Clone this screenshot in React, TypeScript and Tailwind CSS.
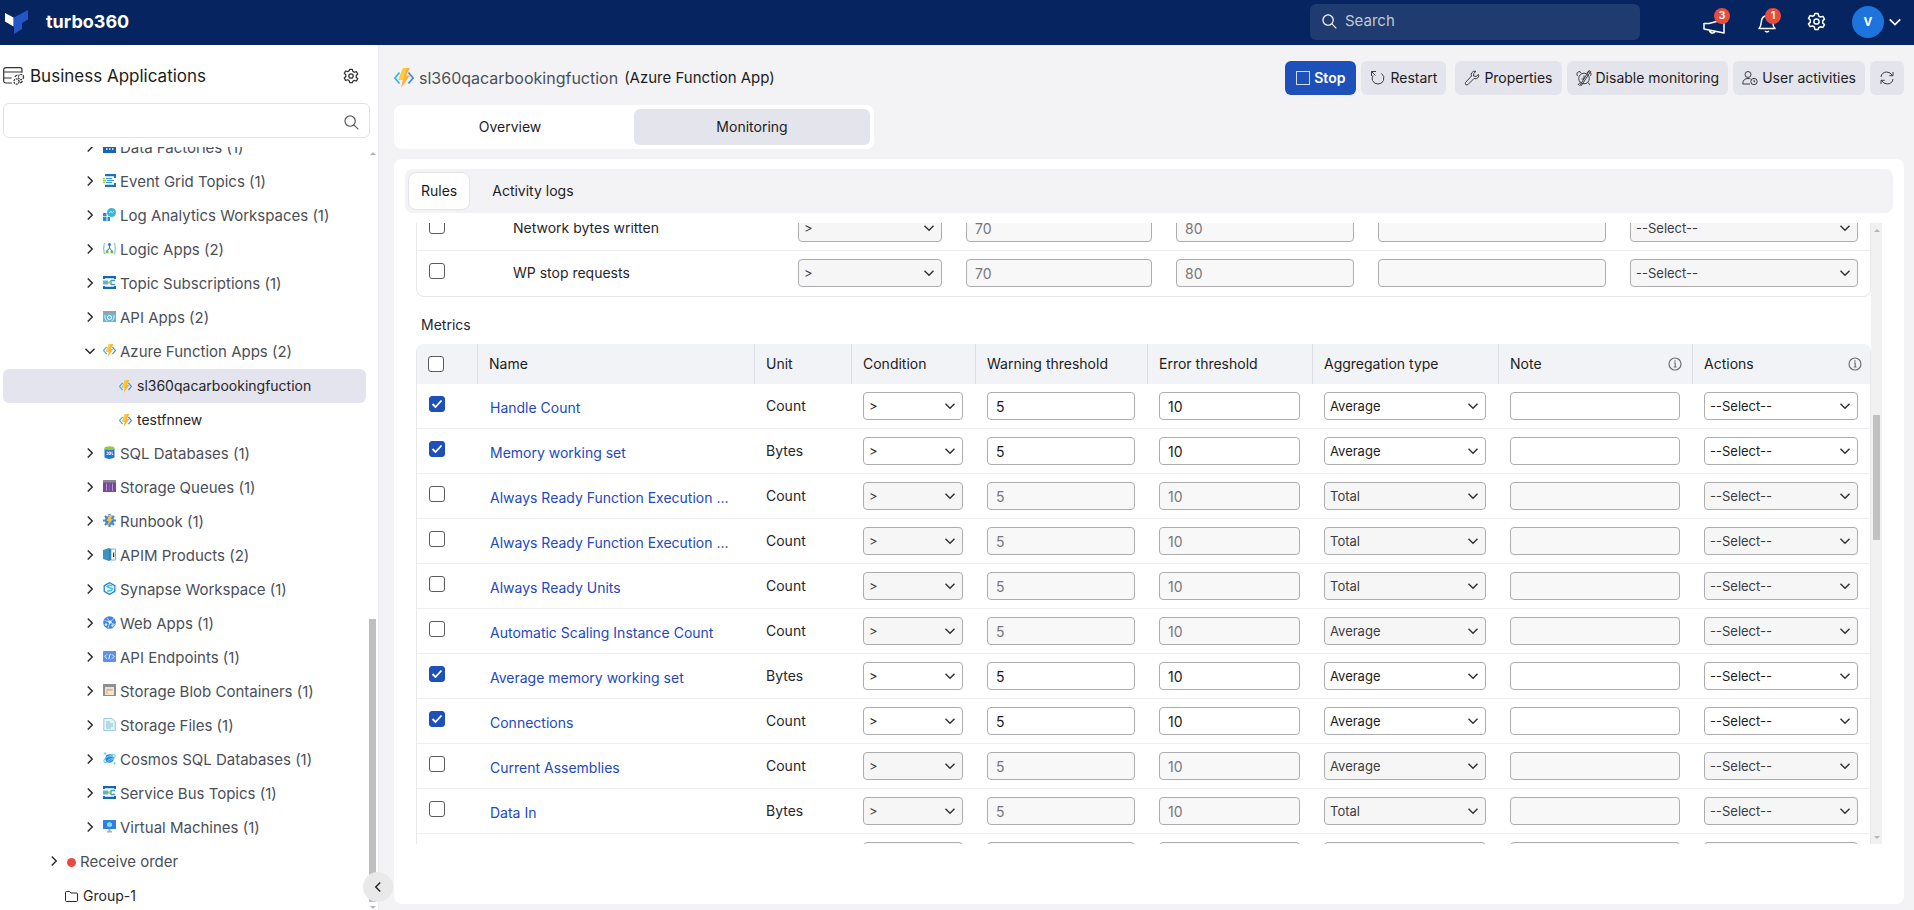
import type { ReactNode } from "react";

/* ---------- small line icons ---------- */

function Chevron({ dir, className }: { dir: "right" | "down" | "left"; className: string }) {
  const d = dir === "right" ? "M5 2l6 6-6 6" : dir === "left" ? "M11 2L5 8l6 6" : "M2 5l6 6 6-6";
  return (
    <svg viewBox="0 0 16 16" className={className} fill="none" stroke="currentColor" strokeWidth="1.9">
      <path d={d} />
    </svg>
  );
}

function Gear({ className }: { className: string }) {
  return (
    <svg viewBox="0 0 24 24" className={className} fill="none" stroke="currentColor" strokeWidth="1.9" strokeLinejoin="round">
      <path d="M10 2h4l.8 3.1 2.2 1.3 3.1-.9 2 3.5-2.3 2.2v2.600l2.300 2.200-2 3.500-3.100-.9-2.200 1.300L14 22h-4l-.8-3.100L7 17.600l-3.100.9-2-3.500 2.300-2.200v-2.600L1.900 8l2-3.500 3.100.9 2.200-1.300z" />
      <circle cx="12" cy="12" r="3.300" />
    </svg>
  );
}

function Magnifier({ className }: { className: string }) {
  return (
    <svg viewBox="0 0 16 16" className={className} fill="none" stroke="currentColor" strokeWidth="1.3">
      <circle cx="6.500" cy="6.500" r="5.500" />
      <path d="M10.500 10.500L15.300 15.300" />
    </svg>
  );
}

function Info() {
  return (
    <svg viewBox="0 0 14 14" className="size-3.5 shrink-0 text-[#6f7076]" fill="none" stroke="currentColor" strokeWidth="1.2">
      <circle cx="7" cy="7" r="6" />
      <path d="M6 6h1.200v4M5.700 10h2.900M7 3.300v1.400" />
    </svg>
  );
}

function Bolt({ className }: { className: string }) {
  return (
    <svg viewBox="0 0 20 20" className={className} fill="none">
      <path d="M5.500 4.500L1 10l4.500 5.500" stroke="#35b6ea" strokeWidth="1.800" />
      <path d="M14.500 4.500L19 10l-4.500 5.500" stroke="#3f8fe0" strokeWidth="1.800" />
      <path d="M9 0h7l-4 7.500h4L7 20l1.800-8H4.500z" fill="#fbb03b" />
      <path d="M4.500 12L9 0h3.500L9 12z" fill="#ffca3a" />
    </svg>
  );
}

/* ---------- resource glyphs for the tree ---------- */

const glyphs: Record<string, ReactNode> = {
  factory: (
    <>
      <path d="M0 5l4-3v3l4-3v3h5v8H0z" fill="#1b63b5" />
      <path d="M3 9h1.500M6 9h1.500M9 9h1.500" stroke="#fff" strokeWidth="1.500" />
    </>
  ),
  grid: (
    <>
      <path d="M2 1.200h11M2 11.800h11" stroke="#1f6fc4" strokeWidth="2.200" />
      <path d="M12 1v3M12 9v3" stroke="#1f6fc4" strokeWidth="2" />
      <path d="M3 4.500h6M4 6.500h7M3 8.500h6" stroke="#2b9bd8" strokeWidth="1" />
      <path d="M0 4.500h2M0 6.500h3M0 8.500h2" stroke="#a7cf3a" strokeWidth="1.300" />
    </>
  ),
  logs: (
    <>
      <path d="M0 5h3.500v8H0zM4.500 8H7v5H4.500z" fill="#2f86dd" />
      <circle cx="8.500" cy="4.500" r="4.500" fill="#37b6d9" />
      <path d="M6 5l2-1.500 1.500 1.200L11 2.800" stroke="#d8f5fb" fill="none" />
      <path d="M0 8.500h7" stroke="#fff" strokeWidth=".7" />
    </>
  ),
  logic: (
    <>
      <path d="M2.500 1Q1 1 1 3v2L.3 6.500 1 8v2q0 2 1.500 2M10.500 1Q12 1 12 3v2l.7 1.500L12 8v2q0 2-1.500 2" stroke="#7cc3e8" fill="none" strokeWidth="1.200" />
      <path d="M6.500 3v3L4 9M6.500 6L9 9" stroke="#2b7bbb" fill="none" />
      <circle cx="6.500" cy="2.500" r="1.500" fill="#2b7bbb" />
      <path d="M2.800 8.500h2.700v2.700H2.800zM7.500 8.500h2.700v2.700H7.500z" fill="#7ab83c" />
    </>
  ),
  topic: (
    <>
      <path d="M0 1.200h13M0 11.800h13" stroke="#1765b3" strokeWidth="2.200" />
      <path d="M1 0v3M12 0v3M1 10v3M12 10v3" stroke="#1765b3" strokeWidth="1.800" />
      <path d="M0 4.500h5v4H0z" fill="#58b4d9" />
      <path d="M5 6.500h3M8 4.500h4M8 8.500h4M8 4v5" stroke="#3d9bd6" strokeWidth="1.300" fill="none" />
      <circle cx="6.500" cy="6.500" r="1.300" fill="#b8d432" />
    </>
  ),
  api: (
    <>
      <path d="M0 1h13v11H0z" fill="#66b7d8" />
      <path d="M0 1h13v2H0z" fill="#9ba0a4" />
      <circle cx="6.500" cy="7.500" r="2" fill="none" stroke="#fff" />
      <path d="M2 5v3q0 2 2.500 3M11 5v3q0 2-2.500 3" stroke="#d9eff8" fill="none" />
    </>
  ),
  sql: (
    <>
      <path d="M1.500 2.500h10v9q-5 2.800-10 0z" fill="#2277cf" />
      <ellipse cx="6.500" cy="2.200" rx="5" ry="1.900" fill="#9cc83c" />
      <path d="M3.500 6H5v2.500H3.500M6 6h1.500v2.500H6zM9 5.500v3h1.200" stroke="#fff" fill="none" strokeWidth=".8" />
    </>
  ),
  queue: (
    <>
      <path d="M0 1h13v11H0z" fill="#76479b" />
      <path d="M0 0h13v2.500H0z" fill="#8a8a90" />
      <path d="M3.500 3.500v7.500M9.500 3.500v7.500" stroke="#b994d2" strokeWidth="1" />
      <path d="M6.500 3.500v7.500" stroke="#8d62ad" />
    </>
  ),
  runbook: (
    <>
      <path d="M6.500 0v13M0 6.500h13M2 2l9 9M11 2l-9 9" stroke="#3f86dd" strokeWidth="2.200" />
      <circle cx="6.500" cy="6.500" r="4.600" fill="#3f86dd" />
      <path d="M6 1h4L7.800 5H10L4.500 12l1.200-5H3.700z" fill="#fdbf3a" />
    </>
  ),
  apim: (
    <>
      <path d="M0 2l6-2v13l-6-2z" fill="#3c93c2" />
      <path d="M6 0l2 1v11l-2 1z" fill="#2b7ba8" />
      <path d="M8 1h4.500v11H8z" fill="#fff" stroke="#4aa3cf" strokeWidth=".8" />
      <path d="M10.800 4l-.8 2v3h1.200V4z" fill="#222" />
    </>
  ),
  synapse: (
    <>
      <path d="M6.500.7l5.300 3v5.700l-5.300 3-5.300-3V3.700z" fill="#fff" stroke="#2a7fd8" strokeWidth="1.300" />
      <path d="M9.500 4Q6 2.500 4 4.500q3 1.500 5.300 2.200Q9 9.500 4 9" stroke="#35c5ee" fill="none" strokeWidth="1.500" />
    </>
  ),
  web: (
    <>
      <circle cx="6.500" cy="6.500" r="6.300" fill="#3f83de" />
      <path d="M1.500 4.500L7 6l4-3.500M7 6l-2 6M7 6l5 3M4 1.500L7 6" stroke="#bcd8f8" fill="none" />
      <circle cx="7" cy="6" r="1.600" fill="#fff" />
      <circle cx="3" cy="8.500" r="1.200" fill="#dcebfc" />
      <circle cx="9.500" cy="9.500" r="1.200" fill="#dcebfc" />
    </>
  ),
  endpoint: (
    <>
      <rect x="0" y="1" width="13" height="11" rx="1" fill="#5a92ec" />
      <path d="M4 4.300L1.800 6.500 4 8.700M9 4.300l2.200 2.200L9 8.700M7.300 3.800L5.700 9.200" stroke="#fff" fill="none" strokeWidth=".9" />
    </>
  ),
  blob: (
    <>
      <path d="M0 0h13v12H0z" fill="#8f8f92" />
      <path d="M2 3h9v8H2z" fill="#e9e2dc" />
      <path d="M3.500 5h6v5h-6z" fill="#f3a067" />
      <path d="M4.500 6.500h6V11h-6z" fill="#fbe3d1" />
    </>
  ),
  files: (
    <>
      <path d="M.8.500h8.500L12.300 3.500V12.500H.8z" fill="#e3f2f8" stroke="#9ccbdd" />
      <path d="M3 4h4M3 6h7M3 8h7M3 10h5" stroke="#7fbad2" strokeWidth=".9" />
    </>
  ),
  cosmos: (
    <>
      <circle cx="6.500" cy="6.500" r="4.300" fill="#2f7fdc" />
      <path d="M4 5Q7 3 10 5M4.500 8.500Q7 6 10 7" stroke="#8fc9f7" fill="none" />
      <ellipse cx="6.500" cy="6.500" rx="6.300" ry="2.400" transform="rotate(-30 6.500 6.500)" fill="none" stroke="#4fd0ef" />
      <path d="M2 0v3M.5 1.500h3M11.500 10v2.500M10.300 11.200h2.500" stroke="#4fd0ef" strokeWidth=".8" />
    </>
  ),
  vm: (
    <>
      <rect x="0" y="0" width="13" height="9" rx=".6" fill="#2f7fe0" />
      <path d="M6.500 2L9 3.300v2.600L6.500 7.200 4 5.900V3.300z" fill="#7fe0f5" />
      <path d="M5.500 9h2v2.500h-2zM4 11.300h5v1.200H4z" fill="#a5a8ad" />
    </>
  ),
};

function Glyph({ name }: { name: string }) {
  if (name === "bolt") return <Bolt className="size-[13px] shrink-0" />;
  return (
    <svg viewBox="0 0 13 13" className="size-[13px] shrink-0">
      {glyphs[name]}
    </svg>
  );
}

/* ---------- header ---------- */

function Badge({ children }: { children: ReactNode }) {
  return (
    <span className="absolute -right-1.5 -top-0.5 flex size-4 items-center justify-center rounded-full bg-[#e74c3c] text-[11px] font-semibold">
      {children}
    </span>
  );
}

function Header() {
  return (
    <header className="flex h-[45px] shrink-0 items-center bg-[#052460] pb-0.5 pl-[5px] pr-3 text-white">
      <svg viewBox="0 0 23 24" className="h-6 w-[23px]">
        <path d="M0 3l8.500 4.500v9L0 11.500z" fill="#fff" />
        <path d="M9 7.500L23 0v9.500l-6 3.500v6L9 24z" fill="#2457c5" />
      </svg>
      <span className="ml-[18px] font-['Inter',sans-serif] text-lg font-bold leading-6">turbo360</span>
      <label className="ml-auto flex h-9 w-[330px] items-center gap-2 rounded-md bg-[#203b70] px-3">
        <Magnifier className="size-[15px] text-white" />
        <input
          aria-label="Search"
          placeholder="Search"
          className="min-w-0 flex-1 bg-transparent text-[15px] text-white outline-none placeholder:text-[#c3c8d3]"
        />
      </label>
      <button aria-label="Announcements" className="relative ml-[63px] h-6 w-[21px]">
        <svg viewBox="0 0 22 16" className="mt-2 h-4 w-[22px]" fill="none" stroke="currentColor" strokeWidth="1.500" strokeLinejoin="round">
          <path d="M1 5v6.500M1 5.500h5L21 1.500v13.500L1 11M6.500 12.500q.5 2.500 3.200 2.500 1.800 0 2.300-1.700" />
        </svg>
        <Badge>3</Badge>
      </button>
      <button aria-label="Notifications" className="relative ml-[34px] h-6 w-[17px]">
        <svg viewBox="0 0 18 19" className="mt-1 h-[19px] w-[18px]" fill="none" stroke="currentColor" strokeWidth="1.500" strokeLinejoin="round">
          <path d="M1 14.500q2-2 2.300-6.500.4-6 5.700-6.500 5.300.5 5.700 6.500.3 4.500 2.300 6.500zM7 17q2 1.800 4 0" />
        </svg>
        <Badge>1</Badge>
      </button>
      <button aria-label="Settings" className="ml-8">
        <Gear className="size-[19px]" />
      </button>
      <button aria-label="Account" className="ml-[26px] flex items-center gap-1">
        <span className="flex size-8 items-center justify-center rounded-full bg-[#1c74dc] text-[15px] font-semibold">v</span>
        <Chevron dir="down" className="size-3.5" />
      </button>
    </header>
  );
}

/* ---------- sidebar ---------- */

const before: [string, string][] = [
  ["factory", "Data Factories (1)"],
  ["grid", "Event Grid Topics (1)"],
  ["logs", "Log Analytics Workspaces (1)"],
  ["logic", "Logic Apps (2)"],
  ["topic", "Topic Subscriptions (1)"],
  ["api", "API Apps (2)"],
];

const after: [string, string][] = [
  ["sql", "SQL Databases (1)"],
  ["queue", "Storage Queues (1)"],
  ["runbook", "Runbook (1)"],
  ["apim", "APIM Products (2)"],
  ["synapse", "Synapse Workspace (1)"],
  ["web", "Web Apps (1)"],
  ["endpoint", "API Endpoints (1)"],
  ["blob", "Storage Blob Containers (1)"],
  ["files", "Storage Files (1)"],
  ["cosmos", "Cosmos SQL Databases (1)"],
  ["topic", "Service Bus Topics (1)"],
  ["vm", "Virtual Machines (1)"],
];

function Branch({ icon, label, open }: { icon: string; label: string; open?: boolean }) {
  return (
    <li className="flex h-[34px] items-center pl-[84px] text-[#4b4f58]">
      <div className="flex items-center gap-[7px] pb-[3px]">
        <button aria-label={`Toggle ${label}`}>
          <Chevron dir={open ? "down" : "right"} className="size-3 text-[#2b2b2f]" />
        </button>
        <Glyph name={icon} />
      </div>
      <span className="ml-1 text-[15px] leading-5">{label}</span>
    </li>
  );
}

function Leaf({ label, selected }: { label: string; selected?: boolean }) {
  return (
    <li className={selected ? "ml-[3px] flex h-[34px] items-center rounded-md bg-[#e3e4ed] pl-[116px]" : "ml-[3px] flex h-[34px] items-center pl-[116px]"}>
      <Glyph name="bolt" />
      <span className="ml-[5px] text-sm text-[#26262b]">{label}</span>
    </li>
  );
}

function Sidebar() {
  return (
    <aside className="relative flex w-[379px] shrink-0 flex-col border-r border-[#ececf0] bg-white">
      <div className="flex h-[58px] shrink-0 items-center pl-[3px] pr-[19px] pt-1">
        <svg viewBox="0 0 22 18" className="h-[18px] w-[22px] text-[#333]" fill="none" stroke="currentColor" strokeWidth="1.200">
          <path d="M9 16H3q-2.300 0-2.300-2.300V3Q.7.700 3 .7h14q2 0 2 2v3M.7 5H19M.7 11h8" />
          <circle cx="18" cy="10" r="2.600" strokeDasharray="2 .8" />
          <circle cx="13.500" cy="14.500" r="2.600" strokeDasharray="2 .8" />
          <path d="M18 10h.1M13.500 14.500h.1M12 10q1-2 2.500-2M17 16q2-.500 2.500-2" />
        </svg>
        <h1 className="ml-[5px] text-[17px] leading-6 text-[#1c1c20]">Business Applications</h1>
        <button aria-label="Sidebar settings" className="ml-auto text-[#333]">
          <Gear className="size-4" />
        </button>
      </div>
      <label className="ml-[3px] mr-2 flex h-[35px] shrink-0 items-center rounded-md border border-[#e3e3e6] pr-2.5">
        <input aria-label="Filter applications" className="min-w-0 flex-1 px-3 text-sm outline-none" />
        <Magnifier className="mt-1 size-[15px] text-[#5c5c60]" />
      </label>
      <div className="mt-[9px] flex min-h-0 flex-1">
        <div className="min-w-0 flex-1 overflow-hidden">
          <ul className="-mt-4 mr-[3px]">
            {before.map(([icon, label]) => (
              <Branch key={label} icon={icon} label={label} />
            ))}
            <Branch icon="bolt" label="Azure Function Apps (2)" open />
            <Leaf label="sl360qacarbookingfuction" selected />
            <Leaf label="testfnnew" />
            {after.map(([icon, label]) => (
              <Branch key={label} icon={icon} label={label} />
            ))}
            <li className="flex h-[34px] items-center pl-12 text-[#4b4f58]">
              <button aria-label="Toggle Receive order" className="mr-[7px] pb-[3px]">
                <Chevron dir="right" className="size-3 text-[#2b2b2f]" />
              </button>
              <span className="size-[9px] rounded-full bg-[#eb4a3d]" />
              <span className="ml-1 text-[15px] leading-5">Receive order</span>
            </li>
            <li className="flex h-[34px] items-center pl-[65px] text-[#26262b]">
              <svg viewBox="0 0 13 11" className="h-[11px] w-[13px]" fill="none" stroke="currentColor">
                <path d="M.5 1.500q0-1 1-1h3l1.500 1.500h5.500q1 0 1 1v6.500q0 1-1 1h-10q-1 0-1-1z" />
              </svg>
              <span className="ml-[5px] text-sm">Group-1</span>
            </li>
          </ul>
        </div>
        <div className="mr-0.5 flex w-[7px] flex-col items-center">
          <span className="mt-[5px] border-x-[3px] border-b-[3px] border-x-transparent border-b-[#b5b5b5]" />
          <div className="mt-[464px] w-full flex-1 bg-[#bfbfbf]" />
          <span className="mb-px mt-1 border-x-[3px] border-t-[3px] border-x-transparent border-t-[#b5b5b5]" />
        </div>
      </div>
      <button
        aria-label="Collapse sidebar"
        className="absolute -right-[15px] bottom-2 z-10 flex size-[30px] items-center justify-center rounded-full bg-[#e9e9e9] text-[#222]"
      >
        <Chevron dir="left" className="size-3" />
      </button>
    </aside>
  );
}

/* ---------- form controls ---------- */

function Select({ label, value, off }: { label: string; value: string; off?: boolean }) {
  return (
    <span className="relative block">
      <select
        aria-label={label}
        defaultValue={value}
        disabled={off}
        className="block h-7 w-full appearance-none rounded border border-[#adadb0] bg-white pl-[5px] pr-6 text-[13px] text-[#1c1c20] disabled:bg-[#f6f6f7] disabled:text-[#3c3c40] disabled:opacity-100"
      >
        <option>{value}</option>
      </select>
      <Chevron dir="down" className="pointer-events-none absolute right-[7px] top-2 size-3 text-[#333]" />
    </span>
  );
}

function Field({ label, value, off }: { label: string; value?: string; off?: boolean }) {
  return (
    <input
      aria-label={label}
      defaultValue={value}
      disabled={off}
      className="block h-7 w-full rounded border border-[#adadb0] bg-white px-2 text-sm text-[#1c1c20] disabled:bg-[#f8f8f9] disabled:text-[#77777b]"
    />
  );
}

function Check({ label, on }: { label: string; on?: boolean }) {
  return (
    <span className="relative block size-4">
      <input
        type="checkbox"
        aria-label={label}
        defaultChecked={on}
        className="peer block size-4 appearance-none rounded-[3px] border border-[#5c5c60] bg-white checked:border-[#1d50b8] checked:bg-[#1d50b8]"
      />
      <svg viewBox="0 0 16 16" className="pointer-events-none absolute inset-0 hidden size-4 peer-checked:block" fill="none" stroke="#fff" strokeWidth="1.800">
        <path d="M3.500 8l3 3 6-6.500" />
      </svg>
    </span>
  );
}

/* ---------- monitoring tables ---------- */

function RuleRow({ name }: { name: string }) {
  return (
    <tr className="h-[45px] [&>td]:border-b [&>td]:border-[#efeff2] last:[&>td]:border-transparent">
      <td className="pb-[5px] pl-3">
        <Check label={name} />
      </td>
      <td className="pl-3">{name}</td>
      <td className="px-3">
        <Select label={`${name} condition`} value=">" off />
      </td>
      <td className="px-3">
        <Field label={`${name} warning`} value="70" off />
      </td>
      <td className="px-3">
        <Field label={`${name} error`} value="80" off />
      </td>
      <td className="px-3">
        <Field label={`${name} note`} off />
      </td>
      <td className="px-3">
        <Select label={`${name} action`} value="--Select--" off />
      </td>
    </tr>
  );
}

type Metric = { name: string; unit: string; agg: string; on?: boolean };

const metrics: Metric[] = [
  { name: "Handle Count", unit: "Count", agg: "Average", on: true },
  { name: "Memory working set", unit: "Bytes", agg: "Average", on: true },
  { name: "Always Ready Function Execution ...", unit: "Count", agg: "Total" },
  { name: "Always Ready Function Execution ...", unit: "Count", agg: "Total" },
  { name: "Always Ready Units", unit: "Count", agg: "Total" },
  { name: "Automatic Scaling Instance Count", unit: "Count", agg: "Average" },
  { name: "Average memory working set", unit: "Bytes", agg: "Average", on: true },
  { name: "Connections", unit: "Count", agg: "Average", on: true },
  { name: "Current Assemblies", unit: "Count", agg: "Average" },
  { name: "Data In", unit: "Bytes", agg: "Total" },
  { name: "Data Out", unit: "Bytes", agg: "Total" },
];

function MetricRow({ name, unit, agg, on }: Metric) {
  const off = !on;
  return (
    <tr className="h-[45px] [&>td]:border-b [&>td]:border-[#efeff2]">
      <td className="pb-[5px] pl-3">
        <Check label={name} on={on} />
      </td>
      <td className="pl-[13px] pt-1">
        <a href="#metric" className="whitespace-nowrap text-[#2348c0]">
          {name}
        </a>
      </td>
      <td className="pl-3">{unit}</td>
      <td className="px-3">
        <Select label={`${name} condition`} value=">" off={off} />
      </td>
      <td className="px-3">
        <Field label={`${name} warning`} value="5" off={off} />
      </td>
      <td className="px-3">
        <Field label={`${name} error`} value="10" off={off} />
      </td>
      <td className="px-3">
        <Select label={`${name} aggregation`} value={agg} off={off} />
      </td>
      <td className="px-3">
        <Field label={`${name} note`} off={off} />
      </td>
      <td className="px-3">
        <Select label={`${name} action`} value="--Select--" off={off} />
      </td>
    </tr>
  );
}

function Tables() {
  const th = "border-l border-[#dcdde4] pl-[11px] text-left font-normal text-[#1c1c20]";
  return (
    <div className="min-w-0 flex-1 overflow-hidden text-sm text-[#26262b]">
      <div className="-mt-[17px] rounded-b-lg border border-t-0 border-[#e8e8ec]">
        <table className="w-full table-fixed border-separate border-spacing-0">
          <colgroup>
            <col className="w-[84px]" />
            <col />
            <col className="w-[168px]" />
            <col className="w-[210px]" />
            <col className="w-[202px]" />
            <col className="w-[252px]" />
            <col className="w-[252px]" />
          </colgroup>
          <tbody>
            <RuleRow name="Network bytes written" />
            <RuleRow name="WP stop requests" />
          </tbody>
        </table>
      </div>
      <h2 className="mt-4 pl-[5px] text-sm leading-6">Metrics</h2>
      <div className="mt-[7px] overflow-hidden rounded-t-lg border border-y-0 border-[#e8e8ec]">
        <table className="w-full table-fixed border-separate border-spacing-0">
          <colgroup>
            <col className="w-[60px]" />
            <col />
            <col className="w-[97px]" />
            <col className="w-[124px]" />
            <col className="w-[172px]" />
            <col className="w-[165px]" />
            <col className="w-[186px]" />
            <col className="w-[194px]" />
            <col className="w-[178px]" />
          </colgroup>
          <thead>
            <tr className="h-10 bg-[#f2f3f6]">
              <th className="pl-[11px]">
                <Check label="Select all metrics" />
              </th>
              <th className={th}>Name</th>
              <th className={th}>Unit</th>
              <th className={th}>Condition</th>
              <th className={th}>Warning threshold</th>
              <th className={th}>Error threshold</th>
              <th className={th}>Aggregation type</th>
              <th className={th}>
                <span className="flex items-center justify-between pr-2.5">
                  Note <Info />
                </span>
              </th>
              <th className={th}>
                <span className="flex items-center justify-between pr-2">
                  Actions <Info />
                </span>
              </th>
            </tr>
          </thead>
          <tbody>
            {metrics.map((m, i) => (
              <MetricRow key={i} {...m} />
            ))}
          </tbody>
        </table>
      </div>
    </div>
  );
}

/* ---------- main area ---------- */

function ToolButton({ icon, label, children }: { icon: ReactNode; label?: string; children?: ReactNode }) {
  return (
    <button aria-label={label} className="flex h-[34px] items-center gap-1 rounded-md bg-[#e3e4ec] px-[9px] text-sm text-[#1c1c20]">
      <svg viewBox="0 0 16 16" className="size-4 text-[#3c3c40]" fill="none" stroke="currentColor" strokeWidth="1">
        {icon}
      </svg>
      {children}
    </button>
  );
}

function Toolbar() {
  return (
    <div className="flex items-center gap-[5px]">
      <button className="flex h-[34px] items-center gap-1 rounded-md bg-[#1d50b8] px-[11px] text-sm font-semibold text-white">
        <span className="size-3.5 border border-[#cfdcf7]" />
        Stop
      </button>
      <div className="mr-1">
        <ToolButton icon={<path d="M1.500 6V1.500H6M1.500 1.500L5.500 5.500M3 5.500Q1.500 8 2.500 10.500q1.500 3.500 5.500 3.500t5.500-3.500Q15 6 11.500 3.500" />}>Restart</ToolButton>
      </div>
      <ToolButton icon={<path d="M14.500 4.500L12 6.500 9.500 6 9.700 3.500 12 1.300Q9 .5 7.500 3 7 4.500 7.500 6L1.500 12.500q-.7 1.500.500 2.300 1 .500 2-.300L10 8.500q3 .800 4.300-1.200.8-1.500.2-2.800z" />}>
        Properties
      </ToolButton>
      <ToolButton
        icon={
          <>
            <circle cx="8" cy="8.500" r="5.300" />
            <path d="M8 5.500v3.500H5.500M1.500 6Q-.5 2 4 1.500l1 1.600M14.500 6q2-4-2.500-4.500l-1 1.600M4 12.500L2 15M12 12.500l2 2.500M13.500 0L3.500 16M15 1L5 16" />
          </>
        }
      >
        Disable monitoring
      </ToolButton>
      <ToolButton
        icon={
          <>
            <circle cx="6" cy="4.500" r="3" />
            <path d="M8 14H.8q0-5.500 5.200-5.500 1.500 0 2.500.500" />
            <circle cx="12" cy="11.500" r="3.200" />
            <path d="M12 9.800v1.900h1.200" />
          </>
        }
      >
        User activities
      </ToolButton>
      <ToolButton
        label="Refresh"
        icon={<path d="M2 7q.5-4.500 5.500-5 4 0 6 3.500M14 2v3.700h-3.700M14 9q-.5 4.500-5.500 5-4 0-6-3.500M2 14v-3.700h3.700" />}
      />
    </div>
  );
}

export default function App() {
  return (
    <div className="flex h-screen flex-col overflow-hidden bg-[#f3f3f6] font-['Inter',sans-serif] text-[#1c1c20]">
      <Header />
      <div className="flex min-h-0 flex-1">
        <Sidebar />
        <main className="flex min-w-0 flex-1 flex-col pb-1.5 pl-[15px] pr-2.5 pt-4">
          <div className="flex h-[34px] shrink-0 items-center justify-between">
            <div className="flex items-center text-[15px]">
              <Bolt className="size-5" />
              <span className="ml-[5px] text-base text-[#4b4f58]">sl360qacarbookingfuction</span>
              <span className="ml-1.5">(Azure Function App)</span>
            </div>
            <Toolbar />
          </div>
          <div role="tablist" className="mt-2.5 flex h-11 w-[480px] shrink-0 gap-3 rounded-lg bg-white p-1 text-sm">
            <button role="tab" aria-selected="false" className="w-56">
              Overview
            </button>
            <button role="tab" aria-selected="true" className="flex-1 rounded-md bg-[#e3e4ec]">
              Monitoring
            </button>
          </div>
          <section className="mt-2.5 flex min-h-0 flex-1 flex-col rounded-lg bg-white pb-[60px] pl-[11px] pr-[11px] pt-2.5">
            <div role="tablist" className="flex h-11 shrink-0 items-center gap-[22px] rounded-lg bg-[#f3f3f6] px-[3px] text-sm">
              <button role="tab" aria-selected="true" className="h-[38px] rounded-lg border border-[#e3e3ea] bg-white px-3">
                Rules
              </button>
              <button role="tab" aria-selected="false">
                Activity logs
              </button>
            </div>
            <div className="ml-[11px] mr-[11px] mt-2.5 flex min-h-0 flex-1">
              <Tables />
              <div className="flex w-[11px] flex-col items-center bg-[#f1f1f1]">
                <span className="mt-1.5 border-x-[3px] border-b-[3px] border-x-transparent border-b-[#b5b5b5]" />
                <div className="mt-[183px] h-[125px] w-[7px] bg-[#c1c1c1]" />
                <span className="mb-[5px] mt-auto border-x-[3px] border-t-[3px] border-x-transparent border-t-[#b5b5b5]" />
              </div>
            </div>
          </section>
        </main>
      </div>
    </div>
  );
}
